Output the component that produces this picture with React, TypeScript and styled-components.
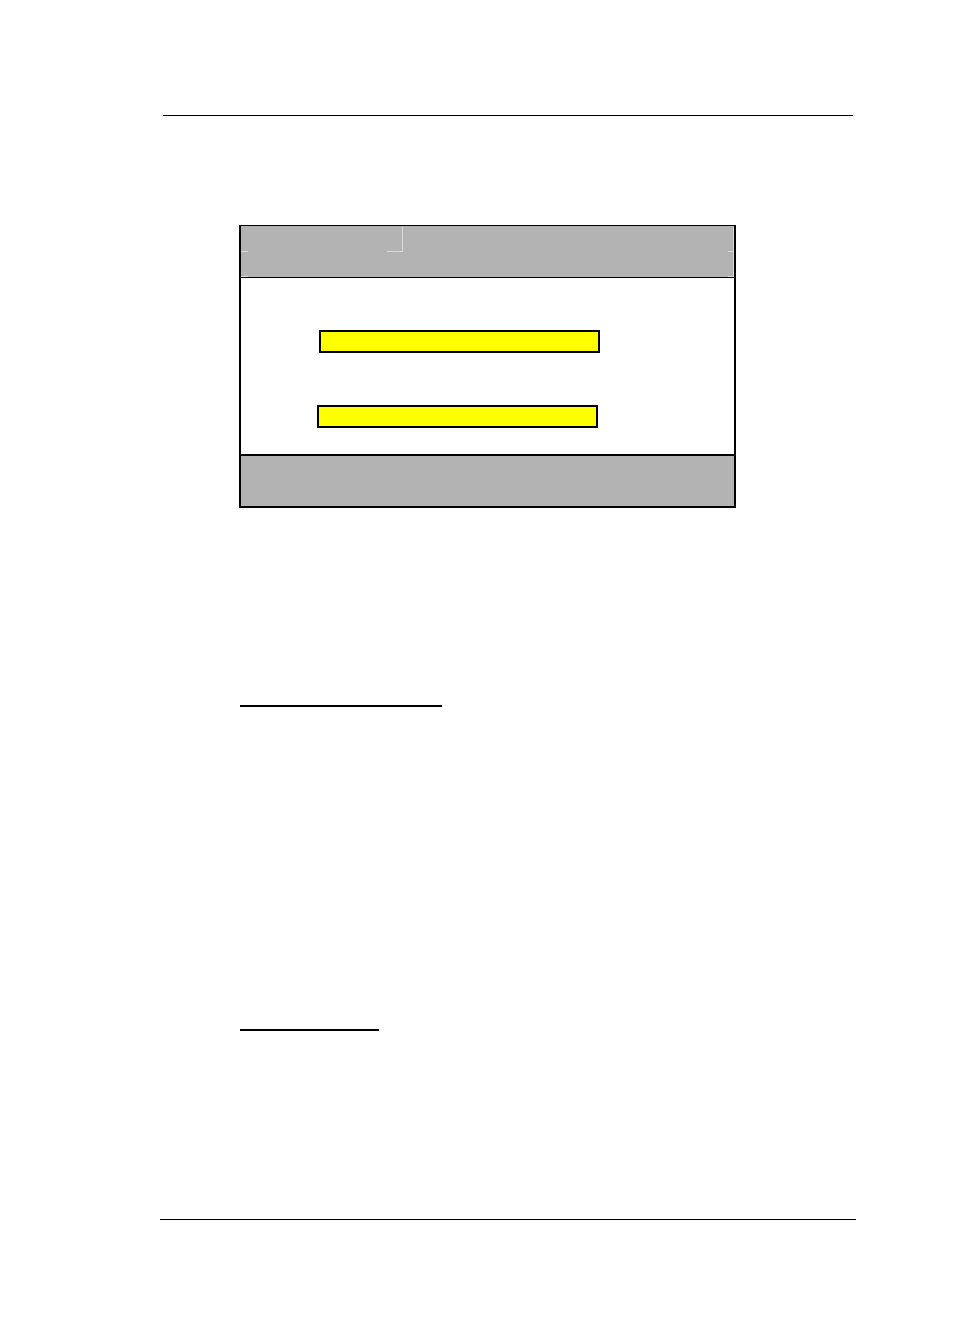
import React from "react";
import styled, { createGlobalStyle } from "styled-components";

const GlobalStyle = createGlobalStyle`
  html, body {
    margin: 0;
    padding: 0;
    background: #ffffff;
    font-family: "Liberation Sans", Arial, sans-serif;
  }
`;

const Page = styled.div`
  width: 953px;
  height: 1337px;
  display: flex;
  flex-direction: column;
  align-items: flex-start;
  background: #ffffff;
`;

const Rule = styled.div<{ $left: number; $width: number; $top: number; $thick?: number }>`
  margin-left: ${(p) => p.$left}px;
  margin-top: ${(p) => p.$top}px;
  width: ${(p) => p.$width}px;
  height: ${(p) => p.$thick ?? 1}px;
  background: #000000;
  flex-shrink: 0;
`;

const Dialog = styled.div`
  margin-left: 239px;
  margin-top: 109px;
  width: 493px;
  border-left: 2px solid #000;
  border-right: 2px solid #000;
  border-top: 1px solid #000;
  border-bottom: 2px solid #000;
  display: flex;
  flex-direction: column;
`;

const TitleBar = styled.div`
  position: relative;
  height: 51px;
  background: #b3b3b3;
  border-bottom: 1px solid #000;
`;

/* faint guide marks printed on the grey title band */
const Mark = styled.span<{ $x: number; $y: number; $w: number; $h: number }>`
  position: absolute;
  left: ${(p) => p.$x}px;
  top: ${(p) => p.$y}px;
  width: ${(p) => p.$w}px;
  height: ${(p) => p.$h}px;
  background: #d9d9d9;
`;

const Body = styled.div`
  height: 124px;
  padding-top: 52px;
  background: #ffffff;
  display: flex;
  flex-direction: column;
  gap: 52px;
`;

const Field = styled.div<{ $indent: number }>`
  margin-left: ${(p) => p.$indent}px;
  width: 277px;
  height: 19px;
  border: 2px solid #000;
  background: #ffff00;
`;

const ButtonBar = styled.div`
  height: 50px;
  background: #b3b3b3;
  border-top: 2px solid #000;
`;

export default function App() {
  return (
    <>
      <GlobalStyle />
      <Page>
        <Rule $left={163} $width={690} $top={115} />
        <Dialog>
          <TitleBar>
            <Mark $x={161} $y={1} $w={1} $h={25} />
            <Mark $x={146} $y={25} $w={15} $h={1} />
            <Mark $x={0} $y={25} $w={7} $h={1} />
            <Mark $x={0} $y={50} $w={7} $h={1} />
            <Mark $x={487} $y={25} $w={6} $h={1} />
            <Mark $x={487} $y={50} $w={6} $h={1} />
            <Mark $x={492} $y={1} $w={1} $h={49} />
          </TitleBar>
          <Body>
            <Field $indent={78} />
            <Field $indent={76} />
          </Body>
          <ButtonBar />
        </Dialog>
        <Rule $left={240} $width={202} $top={197} $thick={2} />
        <Rule $left={240} $width={139} $top={322} $thick={2} />
        <Rule $left={160} $width={696} $top={188} />
      </Page>
    </>
  );
}
